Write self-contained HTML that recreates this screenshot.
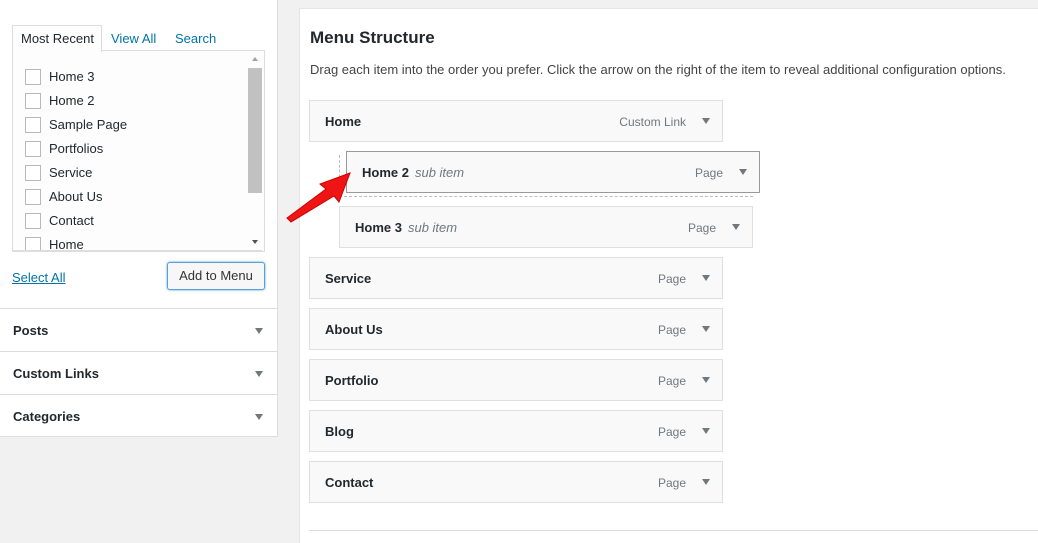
<!DOCTYPE html><html><head><style>
body{margin:0;width:1038px;height:542px;background:#f1f1f1;font-family:"Liberation Sans",sans-serif;font-size:13px;color:#23282d;position:relative;overflow:hidden}
.a{position:absolute}
.lp{left:0;top:0;width:277px;height:436px;background:#fff;border-right:1px solid #ddd;border-bottom:1px solid #ddd}
.rp{left:299px;top:8px;width:739px;height:534px;background:#fff;border-top:1px solid #e5e5e5;border-left:1px solid #e5e5e5}
.cb{width:14px;height:14px;border:1px solid #b4b9be;background:#fff}
.it{background:#f9f9f9;border:1px solid #dfdfdf;box-sizing:border-box;height:42px;font-weight:bold;font-size:13px;color:#23282d}
.it .t{position:absolute;left:15px;top:13px}
.it .ty{position:absolute;right:36px;top:14px;font-weight:normal;font-size:12px;color:#72777c}
.it .ar{position:absolute;right:12px;top:17px;width:0;height:0;border-left:4px solid transparent;border-right:4px solid transparent;border-top:6px solid #72777c}
.sub{font-weight:normal;font-style:italic;color:#72777c;margin-left:6px}
.sec{left:0;width:278px;height:42px;border-top:1px solid #ddd}
.sec span{position:absolute;left:13px;top:14px;font-weight:bold;font-size:13px}
.sec i{position:absolute;right:15px;top:19px;border-left:4px solid transparent;border-right:4px solid transparent;border-top:6px solid #72777c}
</style></head><body>
<div class="a lp"></div>
<div class="a" style="left:12px;top:25px;width:88px;height:26px;border:1px solid #ddd;border-bottom:none;background:#fdfdfd;z-index:2"></div>
<div class="a" style="left:21px;top:31px;z-index:3;color:#23282d">Most Recent</div>
<div class="a" style="left:111px;top:31px;color:#0073aa">View All</div>
<div class="a" style="left:175px;top:31px;color:#0073aa">Search</div>
<div class="a" style="left:12px;top:50px;width:251px;height:200px;border:1px solid #ddd;background:#fdfdfd"></div>
<div class="a" style="left:248px;top:68px;width:14px;height:125px;background:#c1c1c1"></div>
<div class="a" style="left:252px;top:57px;border-left:3px solid transparent;border-right:3px solid transparent;border-bottom:4px solid #a3a3a3"></div>
<div class="a" style="left:252px;top:240px;border-left:3px solid transparent;border-right:3px solid transparent;border-top:4px solid #505050"></div>
<div class="a" style="left:25px;top:66px;line-height:22px">
<div style="position:relative;height:24px"><div class="a cb" style="top:3px"></div><span style="margin-left:24px">Home 3</span></div>
<div style="position:relative;height:24px"><div class="a cb" style="top:3px"></div><span style="margin-left:24px">Home 2</span></div>
<div style="position:relative;height:24px"><div class="a cb" style="top:3px"></div><span style="margin-left:24px">Sample Page</span></div>
<div style="position:relative;height:24px"><div class="a cb" style="top:3px"></div><span style="margin-left:24px">Portfolios</span></div>
<div style="position:relative;height:24px"><div class="a cb" style="top:3px"></div><span style="margin-left:24px">Service</span></div>
<div style="position:relative;height:24px"><div class="a cb" style="top:3px"></div><span style="margin-left:24px">About Us</span></div>
<div style="position:relative;height:24px"><div class="a cb" style="top:3px"></div><span style="margin-left:24px">Contact</span></div>
<div style="position:relative;height:17px;overflow:hidden"><div class="a cb" style="top:3px"></div><span style="margin-left:24px">Home</span></div>
</div>
<div class="a" style="left:13px;top:250px;width:249px;height:2px;background:#ddd"></div>
<div class="a" style="left:12px;top:270px;color:#0073aa;text-decoration:underline">Select All</div>
<div class="a" style="left:167px;top:262px;width:96px;height:26px;border:1px solid #5b9dd9;border-radius:3px;background:#f7f7f7;box-shadow:0 0 2px rgba(30,140,190,.8);text-align:center;line-height:26px;color:#333">Add to Menu</div>
<div class="a sec" style="top:308px"><span>Posts</span><i></i></div>
<div class="a sec" style="top:351px"><span>Custom Links</span><i></i></div>
<div class="a sec" style="top:394px"><span>Categories</span><i></i></div>
<div class="a rp"></div>
<div class="a" style="left:310px;top:28px;font-size:17px;font-weight:bold;color:#23282d">Menu Structure</div>
<div class="a" style="left:310px;top:62px;font-size:13px;color:#444">Drag each item into the order you prefer. Click the arrow on the right of the item to reveal additional configuration options.</div>
<div class="a it" style="left:309px;top:100px;width:414px"><span class="t">Home</span><span class="ty">Custom Link</span><i class="ar"></i></div>
<div class="a" style="left:339px;top:155px;width:413px;height:41px;border-left:1px dashed #bbb;border-bottom:1px dashed #bbb"></div>
<div class="a it" style="left:346px;top:151px;width:414px;border-color:#999"><span class="t">Home 2<span class="sub">sub item</span></span><span class="ty">Page</span><i class="ar"></i></div>
<div class="a it" style="left:339px;top:206px;width:414px"><span class="t">Home 3<span class="sub">sub item</span></span><span class="ty">Page</span><i class="ar"></i></div>
<div class="a it" style="left:309px;top:257px;width:414px"><span class="t">Service</span><span class="ty">Page</span><i class="ar"></i></div>
<div class="a it" style="left:309px;top:308px;width:414px"><span class="t">About Us</span><span class="ty">Page</span><i class="ar"></i></div>
<div class="a it" style="left:309px;top:359px;width:414px"><span class="t">Portfolio</span><span class="ty">Page</span><i class="ar"></i></div>
<div class="a it" style="left:309px;top:410px;width:414px"><span class="t">Blog</span><span class="ty">Page</span><i class="ar"></i></div>
<div class="a it" style="left:309px;top:461px;width:414px"><span class="t">Contact</span><span class="ty">Page</span><i class="ar"></i></div>
<div class="a" style="left:309px;top:530px;width:729px;height:1px;background:#ddd"></div>
<svg class="a" style="left:284px;top:160px" width="70" height="65"><path d="M3 58 L42 29 L36 24 L66 13 L55 42 L50 36 L7 62 Z" fill="#f01515" stroke="#c00" stroke-width="1"/></svg>
</body></html>
